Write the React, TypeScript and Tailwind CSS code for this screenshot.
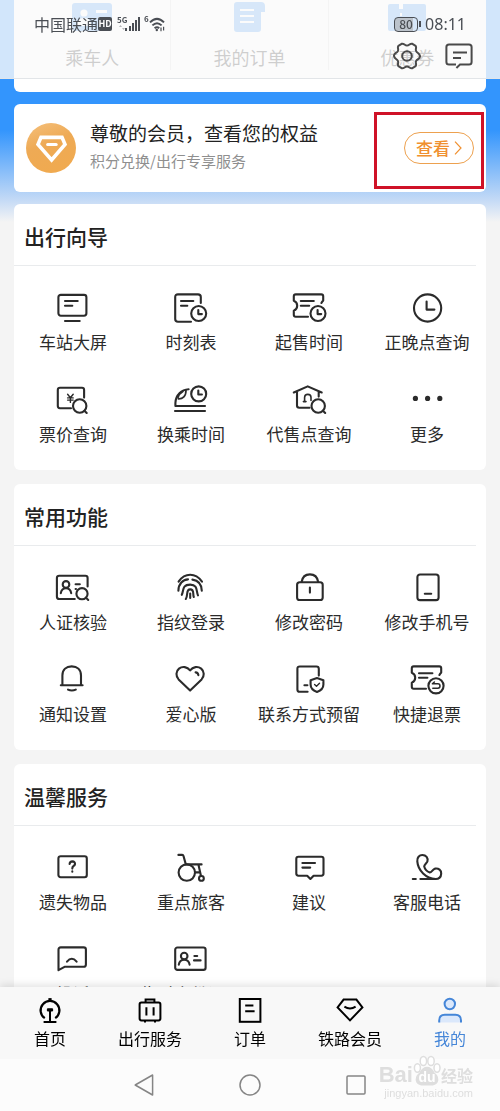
import type { ReactNode } from "react"

type Item = { name: string; icon: ReactNode }

/* Small parts that several icons share */
const Clock = ({ x, y }: { x: number; y: number }) => (
  <>
    <circle cx={x} cy={y} r="7.5" />
    <path d={`M${x - 0.4} ${y - 3.4}v4h3.6`} />
  </>
)

const Lens = ({ x, y, r = 6.7 }: { x: number; y: number; r?: number }) => (
  <>
    <circle cx={x} cy={y} r={r} />
    <path d={`M${x + r * 0.7} ${y + r * 0.7}l2.3 2.3`} />
  </>
)

const ticketPath =
  "M17 24.7H4.7Q2.8 24.7 2.8 22.8V18.6Q6.2 17.2 6.2 13.7Q6.2 10.2 2.8 8.8V4.3Q2.8 2.4 4.7 2.4H30.3Q32.2 2.4 32.2 4.3V8.6Q31.4 9.2 30.4 11"

const guideItems: Item[] = [
  {
    name: "车站大屏",
    icon: (
      <>
        <rect x="3.4" y="2.9" width="28" height="20.8" rx="2.4" />
        <path d="M10 9h12.7M10 13.7h7.3M10 29h14.7" />
      </>
    ),
  },
  {
    name: "时刻表",
    icon: (
      <>
        <path d="M18 29.7H5Q2.2 29.7 2.2 27V5Q2.2 2.4 5 2.4H25Q27.8 2.4 27.8 5V11" />
        <path d="M8 9h12.3M8 13.7h6.3" />
        <Clock x={25.7} y={21.5} />
      </>
    ),
  },
  {
    name: "起售时间",
    icon: (
      <>
        <path d={ticketPath} />
        <path d="M9.8 9h13M9.8 13.7h8.4" />
        <Clock x={27} y={21.5} />
      </>
    ),
  },
  {
    name: "正晚点查询",
    icon: (
      <>
        <circle cx="18.6" cy="16" r="13.6" />
        <path d="M17.6 9.6v8h7.8" />
      </>
    ),
  },
  {
    name: "票价查询",
    icon: (
      <>
        <path d="M16 24.2H4.8Q2.8 24.2 2.8 22V6Q2.8 3.8 5 3.8H27Q29.1 3.8 29.1 6V13.6" />
        <path d="M12.6 10.2l2.8 3.6 2.8-3.6M12.6 13.9h5.6M12.6 16.1h5.6M15.4 13.8v4.6" strokeWidth="1.4" />
        <Lens x={24.7} y={22} />
      </>
    ),
  },
  {
    name: "换乘时间",
    icon: (
      <>
        <path d="M15.6 5.2C8.6 5.6 2.6 11 2.4 19V22H32M2 27H32" />
        <path d="M5.4 14.8C9.6 15 13.2 12.2 13 6M5 13.6Q6 9.8 9.8 7.6" strokeWidth="1.7" />
        <Clock x={25.7} y={9.9} />
      </>
    ),
  },
  {
    name: "代售点查询",
    icon: (
      <>
        <path d="M2.8 8.5L16.7 2.4L30.7 8.5M6 7.6V21.6Q6 23.8 8.2 23.8H18.6M27.7 7.6V12.6" />
        <path d="M12.4 17.6H15M13.6 17.4V13.6Q13.6 10.4 16.8 10.4Q20 10.4 20 13.6V16.4" strokeWidth="1.6" />
        <Lens x={27.2} y={22} />
      </>
    ),
  },
  {
    name: "更多",
    icon: (
      <g fill="currentColor" stroke="none">
        <circle cx="6.4" cy="14.4" r="2.6" />
        <circle cx="18.6" cy="14.4" r="2.6" />
        <circle cx="30.8" cy="14.4" r="2.6" />
      </g>
    ),
  },
]

const commonItems: Item[] = [
  {
    name: "人证核验",
    icon: (
      <>
        <path d="M19.8 27H4.2Q1.9 27 1.9 24.8V6Q1.9 3.8 4.2 3.8H30.4Q32.6 3.8 32.6 6V14.4" />
        <circle cx="11" cy="12.4" r="3.3" />
        <path d="M5.8 21.2Q6.6 16.2 11 16.2Q15.4 16.2 16.2 21.2M20.6 12.2h4.2M20.6 17h.4" />
        <Lens x={27} y={21.7} r={5.6} />
      </>
    ),
  },
  {
    name: "指纹登录",
    icon: (
      <>
        <path d="M5.6 9.6Q10.4 2.8 17.2 2.8Q24 2.8 29 9.6" />
        <path d="M5.4 18.8C5.4 11.8 10 7.6 15 7.4M19.4 7.6C25 8.4 28.6 12.6 28.8 18.8" />
        <path d="M8.8 22.8C10.8 19 8.8 12.6 17.2 12.6C25 12.6 23 19 25 23.4" />
        <path d="M12.8 27C15.4 23 12.6 17.4 17.2 17.4C21.8 17.4 19.4 22 20.8 25M17.2 21.6V26" />
      </>
    ),
  },
  {
    name: "修改密码",
    icon: (
      <>
        <rect x="6.1" y="10.2" width="25.6" height="17.8" rx="2.6" />
        <path d="M10.6 10C11.4 5 14.4 2.4 18.9 2.4S26.4 5 27.2 10M18.9 15.6v5" />
      </>
    ),
  },
  {
    name: "修改手机号",
    icon: (
      <>
        <rect x="8.4" y="2.5" width="21.2" height="25.6" rx="2.6" />
        <path d="M15.8 21.7h6.4" />
      </>
    ),
  },
  {
    name: "通知设置",
    icon: <path d="M5.8 21.2H27.6M7.4 21V11.4C7.4 5.8 11.2 2.4 16.7 2.4S26 5.8 26 11.4V21M13 25.6Q16.8 27.4 20.8 25.6" />,
  },
  {
    name: "爱心版",
    icon: (
      <>
        <path d="M17.1 26.6L5.6 15.4C2.6 12.2 2.8 7.2 6 4.6C9.4 2 14.2 2.6 17.1 6.4C20 2.6 24.8 2 28.2 4.6C31.4 7.2 31.6 12.2 28.6 15.4Z" />
        <path d="M22.6 8.4Q25 8.6 25.4 11.2" />
      </>
    ),
  },
  {
    name: "联系方式预留",
    icon: (
      <>
        <path d="M16.6 27.8H8.6Q6.4 27.8 6.4 25.4V4.8Q6.4 2.5 8.8 2.5H25.4Q27.8 2.5 27.8 4.8V11.6" />
        <path d="M13.4 21.3h3" />
        <path d="M26 14L32.4 16.2V20.6C32.4 24 30 26.6 26 28C22 26.6 19.6 24 19.6 20.6V16.2Z" />
        <path d="M23.6 20.4l1.9 1.8 3-3" strokeWidth="1.4" />
      </>
    ),
  },
  {
    name: "快捷退票",
    icon: (
      <>
        <path d={ticketPath} />
        <path d="M10 9.2h13.4M10 13.7h8.4" />
        <circle cx="27" cy="21.8" r="7.6" />
        <path d="M25.4 18l-2 1.8h5.4q2.2 0 2.2 2.2t-2.2 2.2h-5" strokeWidth="1.5" />
      </>
    ),
  },
]

const warmItems: Item[] = [
  {
    name: "遗失物品",
    icon: (
      <>
        <rect x="3.4" y="4.2" width="28.4" height="21" rx="2.2" />
        <path d="M14.6 12Q14.8 9.4 17.4 9.4Q20.2 9.6 20 12Q19.8 13.4 18.4 14.2Q17.3 15 17.3 16.6M17.3 19.4v.3" />
      </>
    ),
  },
  {
    name: "重点旅客",
    icon: (
      <>
        <path d="M5.4 2.9H9.2Q10.2 2.9 10.5 4L12.8 12.4H28.6M25.4 12.6L28 24M22.2 20.4H26.6" />
        <circle cx="13.8" cy="20.6" r="8.2" />
        <circle cx="28.4" cy="26.4" r="2.4" />
      </>
    ),
  },
  {
    name: "建议",
    icon: (
      <>
        <path d="M7.4 4.7H30.4Q32.5 4.7 32.5 6.8V21.6Q32.5 23.7 30.4 23.7H22.6L19.4 27L16.2 23.7H7.4Q5.3 23.7 5.3 21.6V6.8Q5.3 4.7 7.4 4.7Z" />
        <path d="M11.4 11H24M11.4 15.6h7.8" />
      </>
    ),
  },
  {
    name: "客服电话",
    icon: (
      <>
        <path d="M8.3 9.4C7.8 5.4 10.4 3 13.4 3C17 3 19.4 6 18.4 9.4C17.8 11.2 15.4 12.2 15.2 14.4C15.8 17.2 18 19.6 20.8 20.4C22.8 20.4 23.4 17.4 26.2 16.6C29.6 16 32.4 18.4 32.2 21.6C32 25 29.6 27 26.6 27C17 26.4 9 18.6 8.3 9.4Z" />
        <path d="M3.8 27h3M11.4 27h15" />
      </>
    ),
  },
  {
    name: "投诉",
    icon: (
      <>
        <path d="M3.5 26.2V5.6Q3.5 3.4 5.8 3.4H28.6Q30.9 3.4 30.9 5.6V20.4Q30.9 22.7 28.6 22.7H10Z" />
        <path d="M12 17.6Q16.8 12 21.6 17.6" />
      </>
    ),
  },
  {
    name: "临时身份证明",
    icon: (
      <>
        <rect x="2.2" y="3.5" width="30.4" height="22.4" rx="2.2" />
        <circle cx="11.2" cy="12" r="3.3" />
        <path d="M5.8 20.6Q6.6 15.8 11.2 15.8T16.6 20.6M21.4 12h2.8M21 16.4h6.6" />
      </>
    ),
  },
]

const tabs: Item[] = [
  {
    name: "首页",
    icon: (
      <>
        <path d="M8.8 22.2A9.4 9.4 0 1 1 19.2 22.2" strokeWidth="2.2" />
        <path d="M12.4 3.4h3.2" strokeWidth="2.6" />
        <path d="M11.4 12.8h5.2v2.2h-5.2z" fill="currentColor" strokeWidth="1" />
        <path d="M14 15V25.4M7.6 26h12.8" />
      </>
    ),
  },
  {
    name: "出行服务",
    icon: (
      <>
        <rect x="3.6" y="6.6" width="20.8" height="17.8" rx="1.8" />
        <path d="M9.6 6.4V3.4H18.4V6.4M10.4 11.2v8.4M17.6 11.2v8.4M9 24.4v2.2M19 24.4v2.2" />
      </>
    ),
  },
  {
    name: "订单",
    icon: (
      <>
        <rect x="3.8" y="3" width="20.6" height="22.8" />
        <path d="M9.2 9.4h8.2M9.2 15.2h9.4" />
      </>
    ),
  },
  {
    name: "铁路会员",
    icon: <path d="M7.6 3.6H20.4L26.4 11.4L14 24.4L1.6 11.4ZM8.4 10.6Q14 14.2 19.6 10.6" />,
  },
  {
    name: "我的",
    icon: (
      <g fill="#dbe8fb">
        <circle cx="13.8" cy="8" r="5.2" />
        <path d="M3.2 26.6V24.4Q3.2 18.8 8.8 18.8H19.4Q25 18.8 25 24.4V26.6" />
      </g>
    ),
  },
]

const quickItems: Item[] = [
  {
    name: "乘车人",
    icon: (
      <>
        <rect x="0" y="3" width="40" height="28" rx="3" />
        <circle cx="12" cy="13" r="3.6" fill="#fff" />
        <path d="M5 26q0-8 7-8t7 8zM24 10h11v3H24zM26 17h9v3h-9z" fill="#fff" />
      </>
    ),
  },
  {
    name: "我的订单",
    icon: (
      <>
        <path d="M8 2h24q4 0 4 4v6h-4v17q0 3-3 3H8q-3 0-3-3V5q0-3 3-3z" />
        <path d="M11 9h14v2H11zM11 15h14v2H11zM11 21h14v2H11z" fill="#fff" />
      </>
    ),
  },
  {
    name: "优惠券",
    icon: (
      <>
        <rect x="1" y="4" width="38" height="27" rx="2" />
        <path d="M12 4h4v5h-4zM13 13h2v3h-2zM13 19h2v3h-2zM13 26h2v5h-2z" fill="#fff" />
      </>
    ),
  },
]

function StatusBar() {
  return (
    <div className="flex h-6 items-center justify-between px-[34px] text-[#4a4e54]">
      <div className="flex items-center">
        <span className="text-base leading-6">中国联通</span>
        <span className="flex h-[14px] w-[14px] items-center justify-center rounded-xs bg-[#4a4e54] text-[9px] font-bold text-white">
          HD
        </span>
        <svg className="ml-1 h-5 w-7" viewBox="0 0 28 20" fill="currentColor">
          <text x="1" y="9" fontSize="8" fontWeight="700">5G</text>
          <path d="M3 13l1.5-2L6 13zM6 14l1.5 2L9 14z" opacity=".4" />
          <path d="M9 14h2v3H9zM13 12h2v5h-2zM16 9h2v8h-2zM19 6h2v11h-2zM22 3h2v14h-2z" />
        </svg>
        <svg className="h-5 w-6" viewBox="0 0 24 20" fill="none" stroke="currentColor" strokeWidth="2">
          <text x="0" y="8" fontSize="8" fontWeight="700" fill="currentColor" stroke="none">6</text>
          <path d="M6 8.4Q13 1.4 20 8.4M8.4 11.4Q13 7 17.6 11.4M10.6 14.2Q13 12.2 15.2 14.2" />
          <circle cx="12.8" cy="16" r="1.2" fill="currentColor" stroke="none" />
          <path d="M17 13.6v3.6M19.6 12.8v3.6" strokeWidth="1.2" />
        </svg>
      </div>
      <div className="flex items-center">
        <span className="flex h-[15px] w-6 items-center justify-center rounded-sm border border-[#4a4e54] bg-linear-to-r from-[#bcc3cb] from-80% to-transparent to-80% text-xs font-medium">
          80
        </span>
        <span className="ml-px h-[6px] w-[2px] bg-[#4a4e54]" />
        <span className="ml-1 font-['Noto_Sans'] text-base leading-6">08:11</span>
      </div>
    </div>
  )
}

function Header() {
  return (
    <header className="absolute inset-x-0 top-0 z-10 border-b border-[#e2e5e8] bg-[#fafafa]/80 pt-3 pb-2">
      <StatusBar />
      <div className="mt-[6px] flex justify-end gap-6 pr-[27px] text-[#4a4a4a]">
        <button aria-label="设置">
          <svg className="h-7 w-7" viewBox="0 0 28 28" fill="none" stroke="currentColor" strokeWidth="2" strokeLinejoin="round">
            <path d="M8.6 1.8C11 1 11.6 3.6 14 3.6S17 1 19.4 1.8L22.6 3.8C24 5.6 22 7.2 23.2 9.2S26.6 11.2 27 14S24.4 16.8 23.2 18.8S24 22.4 22.6 24.2L19.4 26.2C17 27 16.4 24.4 14 24.4S11 27 8.6 26.2L5.4 24.2C4 22.4 6 20.8 4.8 18.8S1.4 16.8 1 14S3.6 11.2 4.8 9.2S4 5.6 5.4 3.8Z" />
            <circle cx="14" cy="14" r="4.8" />
          </svg>
        </button>
        <button aria-label="消息">
          <svg className="h-7 w-7" viewBox="0 0 28 28" fill="none" stroke="currentColor" strokeWidth="2">
            <path d="M11 22.6H4Q1.4 22.6 1.4 20V5Q1.4 2.4 4 2.4H24Q26.6 2.4 26.6 5V20Q26.6 22.6 24 22.6H15L11.4 26M8 10.6h14M8 16h8" />
          </svg>
        </button>
      </div>
    </header>
  )
}

function Section({ title, items }: { title: string; items: Item[] }) {
  return (
    <section className="rounded-md bg-white pb-[26px]">
      <div className="mr-[10px] border-b border-[#e9ebed] py-4">
        <h2 className="pt-1 pl-[10px] text-[21px] leading-[25px] font-medium text-[#222]">{title}</h2>
      </div>
      <div className="grid grid-cols-4 gap-y-8 pt-[26px]">
        {items.map(({ name, icon }) => (
          <button key={name} className="flex flex-col items-center gap-2 text-[#2b2b2b]">
            <svg
              className="h-8 w-9"
              viewBox="0 0 36 32"
              fill="none"
              stroke="currentColor"
              strokeWidth="2.1"
              strokeLinecap="round"
              strokeLinejoin="round"
            >
              {icon}
            </svg>
            <span className="text-[17px] leading-5 whitespace-nowrap">{name}</span>
          </button>
        ))}
      </div>
    </section>
  )
}

function MemberCard() {
  return (
    <section className="relative mb-3 flex h-[88px] items-center rounded-md bg-white px-3">
      <svg className="h-[50px] w-[50px] shrink-0" viewBox="0 0 50 50" fill="none">
        <defs>
          <linearGradient id="gold" x1="0" y1="0" x2="0.4" y2="1">
            <stop offset="0" stopColor="#f5c07c" />
            <stop offset="0.5" stopColor="#eeaa55" />
            <stop offset="1" stopColor="#f0aa50" />
          </linearGradient>
        </defs>
        <circle cx="25" cy="25" r="25" fill="url(#gold)" />
        <path d="M15 14.4H36L39 21.4L25.6 37L12 21.4Z" stroke="#fff" strokeWidth="3.6" />
        <path d="M21.6 21.4h8.6" stroke="#fff" strokeWidth="3" strokeLinecap="round" />
      </svg>
      <div className="ml-[14px] flex-1 pb-1">
        <p className="text-[19px] leading-[30px] text-[#222]">尊敬的会员，查看您的权益</p>
        <p className="text-[15px] leading-[26px] text-[#8f8f8f]">积分兑换/出行专享服务</p>
      </div>
      <button className="flex h-8 w-[70px] items-center justify-center gap-1 rounded-full border border-[#eda14f] text-[17px] font-medium text-[#f09030]">
        查看
        <svg className="h-4 w-2" viewBox="0 0 8 16" fill="none" stroke="currentColor" strokeWidth="1.2">
          <path d="M1 1.6L7 8L1 14.4" />
        </svg>
      </button>
      <div className="pointer-events-none absolute top-2 right-[2px] h-[77px] w-[110px] border-3 border-[#cf1228]" />
    </section>
  )
}

function Watermark() {
  return (
    <div className="pointer-events-none absolute right-[27px] bottom-3 text-[#dedede]">
      <div className="flex items-end justify-end text-[22px] leading-6 font-bold">
        <span className="font-['Liberation_Sans']">Bai</span>
        <span className="relative flex h-8 w-7 items-end justify-center">
          <svg className="absolute inset-0 h-8 w-7" viewBox="0 0 28 32" fill="#fff" stroke="currentColor" strokeWidth="1.5">
            <ellipse cx="4.4" cy="13" rx="3" ry="4.2" />
            <ellipse cx="10.4" cy="6" rx="3.2" ry="4.6" />
            <ellipse cx="18" cy="6" rx="3.2" ry="4.6" />
            <ellipse cx="24" cy="13" rx="3" ry="4.2" />
            <path d="M14 12.6Q18 12.6 21 18Q26 22 24 27Q21 31 14 29.4Q7 31 4 27Q2 22 7 18Q10 12.6 14 12.6Z" fill="currentColor" />
          </svg>
          <span className="relative font-['Liberation_Sans'] text-sm text-white">du</span>
        </span>
        <span className="text-base leading-6">经验</span>
      </div>
      <p className="text-right font-['Liberation_Sans'] text-[11px] leading-3">jingyan.baidu.com</p>
    </div>
  )
}

export default function App() {
  return (
    <div className="relative flex h-screen flex-col overflow-hidden bg-[#f4f4f4] font-['Noto_Sans_CJK_SC',sans-serif]">
      <Header />

      <main className="flex-1 overflow-y-auto [scrollbar-width:none]">
        <div className="bg-[linear-gradient(to_bottom,#3395fd_130px,#c4daf6_200px,#f4f4f4_222px)] px-[14px] pb-6">
          {/* Quick links */}
          <section className="mb-3 grid grid-cols-3 divide-x divide-[#ddd] rounded-b-md bg-white pb-[22px]">
            {quickItems.map(({ name, icon }) => (
              <button key={name} className="flex flex-col items-center gap-3 text-[#222]">
                <svg className="h-8 w-10" viewBox="0 0 40 32" fill="#4a9cf5">
                  {icon}
                </svg>
                <span className="text-lg leading-[26px]">{name}</span>
              </button>
            ))}
          </section>

          <MemberCard />

          <div className="flex flex-col gap-[14px]">
            <Section title="出行向导" items={guideItems} />
            <Section title="常用功能" items={commonItems} />
            <Section title="温馨服务" items={warmItems} />
          </div>
        </div>
      </main>

      {/* Tab bar */}
      <nav className="relative grid grid-cols-5 bg-[#f8f8f8] pt-[9px] pb-[11px] shadow-[0_-2px_8px_rgba(0,0,0,0.12)]">
        {tabs.map(({ name, icon }) => (
          <a
            key={name}
            href="#"
            aria-current={name === "我的" ? "page" : undefined}
            className="flex flex-col items-center gap-1 text-black aria-[current=page]:text-[#4586d8]"
          >
            <svg className="h-7 w-7" viewBox="0 0 28 28" fill="none" stroke="currentColor" strokeWidth="2">
              {icon}
            </svg>
            <span className="text-base leading-5">{name}</span>
          </a>
        ))}
      </nav>

      {/* System buttons */}
      <div className="relative flex h-[52px] items-center justify-center gap-[82px] bg-[#fcfcfc] text-[#858585]">
        <button aria-label="返回">
          <svg className="h-6 w-6" viewBox="0 0 24 24" fill="none" stroke="currentColor" strokeWidth="1.5" strokeLinejoin="round">
            <path d="M20.6 2V22L3.2 12Z" />
          </svg>
        </button>
        <button aria-label="主屏幕">
          <svg className="h-6 w-6" viewBox="0 0 24 24" fill="none" stroke="currentColor" strokeWidth="1.5">
            <circle cx="12" cy="12" r="10" />
          </svg>
        </button>
        <button aria-label="最近任务">
          <svg className="h-6 w-6" viewBox="0 0 24 24" fill="none" stroke="currentColor" strokeWidth="1.5">
            <rect x="3" y="3" width="18" height="18" rx="1" />
          </svg>
        </button>
        <Watermark />
      </div>
    </div>
  )
}
